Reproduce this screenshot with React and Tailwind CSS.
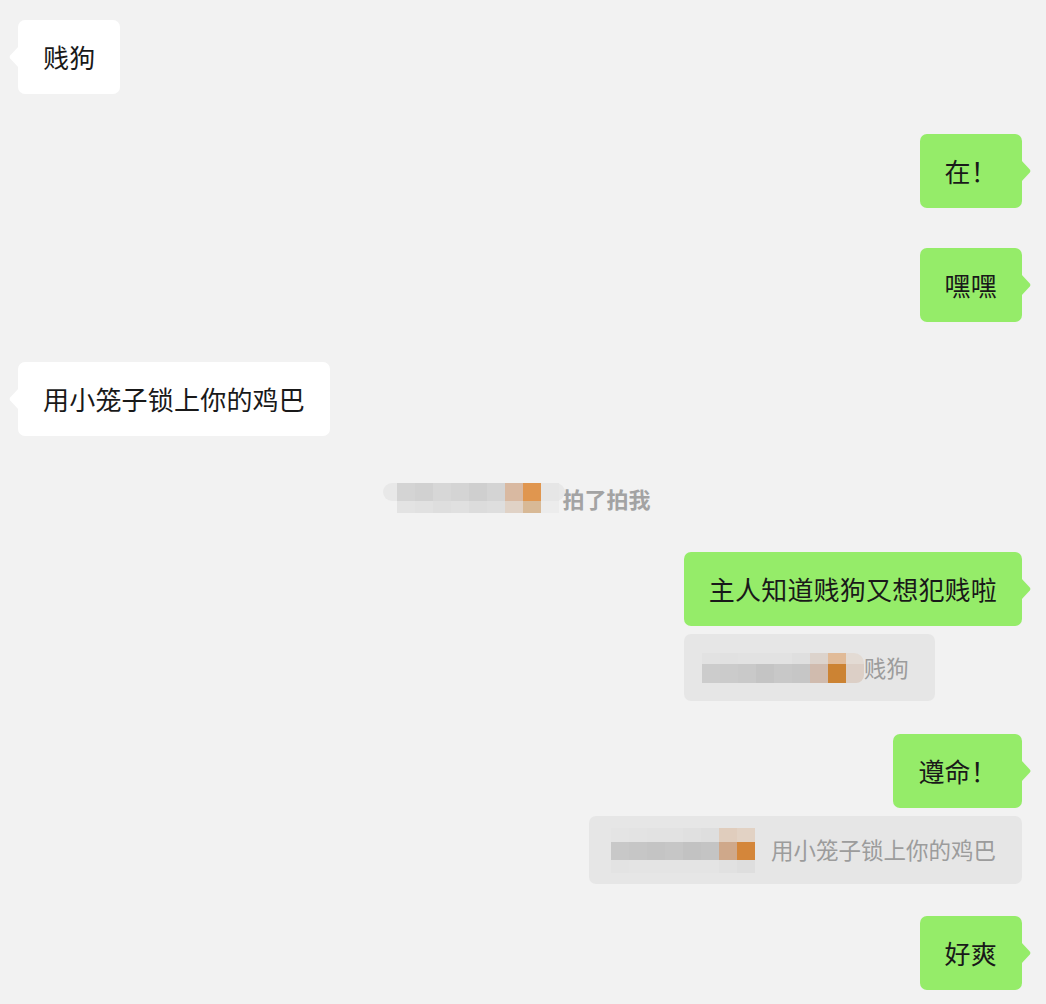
import React from 'react';

const font = 'font-["Noto_Sans_CJK_SC","Noto_Sans",sans-serif]';

const Tail = ({ side, color }) =>
  side === 'left' ? (
    <svg className="absolute left-[-10px] top-1/2 -translate-y-1/2" width="11" height="22" viewBox="0 0 11 22">
      <path d="M11 0 L11 22 L2.2 12.6 Q0.8 11 2.2 9.4 Z" className={color} />
    </svg>
  ) : (
    <svg className="absolute right-[-10px] top-1/2 -translate-y-1/2" width="11" height="22" viewBox="0 0 11 22">
      <path d="M0 0 L0 22 L8.8 12.6 Q10.2 11 8.8 9.4 Z" className={color} />
    </svg>
  );

const Bubble = ({ side, children }) => {
  const mine = side === 'right';
  return (
    <div
      className={`relative rounded-[7px] px-[25px] py-[19px] text-[26px] leading-[36px] tracking-[0.2px] text-[#191919] whitespace-nowrap ${
        mine ? 'bg-[#95ec69]' : 'bg-white'
      }`}
    >
      {children}
      <Tail side={side} color={mine ? 'fill-[#95ec69]' : 'fill-white'} />
    </div>
  );
};

// pixelated name blocks
const Mosaic = ({ rows, className = '' }) => (
  <div className={`flex flex-col ${className}`}>
    {rows.map((row, i) => (
      <div key={i} className={`flex ${row.h}`}>
        {row.cells.map((c, j) => (
          <div key={j} className={`w-[18px] h-full ${c}`} />
        ))}
      </div>
    ))}
  </div>
);

const Quote = ({ mosaic, text, className = '' }) => (
  <div
    className={`flex items-center rounded-[7px] bg-[#e6e6e6] pl-[18px] pr-[26px] h-[67px] text-[22.5px] text-[#9c9c9c] whitespace-nowrap ${className}`}
  >
    {mosaic}
    <span>{text}</span>
  </div>
);

export default function App() {
  return (
    <div className={`min-h-[1004px] w-full bg-[#f2f2f2] pl-[18px] pr-[24px] pt-[20px] ${font}`}>
      <div className="flex flex-col">
        <div className="flex">
          <Bubble side="left">贱狗</Bubble>
        </div>

        <div className="flex justify-end mt-[40px]">
          <Bubble side="right">在！</Bubble>
        </div>

        <div className="flex justify-end mt-[40px]">
          <Bubble side="right">嘿嘿</Bubble>
        </div>

        <div className="flex mt-[40px]">
          <Bubble side="left">用小笼子锁上你的鸡巴</Bubble>
        </div>

        {/* system tip */}
        <div className="flex justify-center items-center mt-[44px] h-[36px] pr-[6px]">
          <div className="relative w-[182px] h-[30px]">
            <div className="absolute left-0 top-0 h-[18px] w-[182px] rounded-full bg-[#e8e8e8]" />
            <Mosaic
              className="absolute left-[14px] top-0"
              rows={[
                {
                  h: 'h-[18px]',
                  cells: [
                    'bg-[#d4d4d4]',
                    'bg-[#d1d1d1]',
                    'bg-[#d7d7d7]',
                    'bg-[#d4d4d4]',
                    'bg-[#cfcfcf]',
                    'bg-[#d4d4d4]',
                    'bg-[#d9b9a1]',
                    'bg-[#e0964f]',
                    'bg-[#e6e6e6]',
                  ],
                },
                {
                  h: 'h-[12px]',
                  cells: [
                    'bg-[#e3e3e3]',
                    'bg-[#e1e1e1]',
                    'bg-[#dedede]',
                    'bg-[#e0e0e0]',
                    'bg-[#dcdcdc]',
                    'bg-[#dedede]',
                    'bg-[#e0d2c6]',
                    'bg-[#d8b996]',
                    'bg-[#ececec]',
                  ],
                },
              ]}
            />
          </div>
          <span className="-ml-[3px] text-[22px] font-bold text-[#a3a3a3]">拍了拍我</span>
        </div>

        <div className="flex justify-end mt-[36px]">
          <div className="flex flex-col items-start">
            <Bubble side="right">主人知道贱狗又想犯贱啦</Bubble>
            <Quote
              className="mt-[8px]"
              text="贱狗"
              mosaic={
                <Mosaic
                  rows={[
                    {
                      h: 'h-[11px]',
                      cells: [
                        'bg-[#e2e2e2]',
                        'bg-[#e1e1e1]',
                        'bg-[#e2e2e2]',
                        'bg-[#e2e2e2]',
                        'bg-[#e2e2e2]',
                        'bg-[#dfdfdf]',
                        'bg-[#dcd3cc]',
                        'bg-[#e1bb98]',
                        'bg-[#e3dbd4] rounded-tr-[10px]',
                      ],
                    },
                    {
                      h: 'h-[19px]',
                      cells: [
                        'bg-[#cccccc]',
                        'bg-[#cbcbcb]',
                        'bg-[#c9c9c9]',
                        'bg-[#c4c4c4]',
                        'bg-[#c8c8c8]',
                        'bg-[#c6c6c6]',
                        'bg-[#d0bbae]',
                        'bg-[#cc8333]',
                        'bg-[#dccfc6] rounded-br-[8px]',
                      ],
                    },
                  ]}
                />
              }
            />
          </div>
        </div>

        <div className="flex justify-end mt-[33px]">
          <div className="flex flex-col items-end">
            <Bubble side="right">遵命！</Bubble>
            <Quote
              className="mt-[8px] pl-[22px] pr-[25px] h-[68px]"
              text="用小笼子锁上你的鸡巴"
              mosaic={
                <Mosaic
                  className="mr-[16px]"
                  rows={[
                    {
                      h: 'h-[14px]',
                      cells: [
                        'bg-[#e4e4e4]',
                        'bg-[#e3e3e3]',
                        'bg-[#e2e2e2]',
                        'bg-[#e2e2e2]',
                        'bg-[#e0e0e0]',
                        'bg-[#dedede]',
                        'bg-[#e0cdbd]',
                        'bg-[#e2d2c4]',
                      ],
                    },
                    {
                      h: 'h-[18px]',
                      cells: [
                        'bg-[#c8c8c8]',
                        'bg-[#c6c6c6]',
                        'bg-[#c4c4c4]',
                        'bg-[#c6c6c6]',
                        'bg-[#c2c2c2]',
                        'bg-[#c4c4c4]',
                        'bg-[#cfa88a]',
                        'bg-[#d4863a]',
                      ],
                    },
                    {
                      h: 'h-[13px]',
                      cells: [
                        'bg-[#e3e3e3]',
                        'bg-[#e4e4e4]',
                        'bg-[#e4e4e4]',
                        'bg-[#e4e4e4]',
                        'bg-[#e4e4e4]',
                        'bg-[#e4e4e4]',
                        'bg-[#e1e1e1]',
                        'bg-[#dedede]',
                      ],
                    },
                  ]}
                />
              }
            />
          </div>
        </div>

        <div className="flex justify-end mt-[32px]">
          <Bubble side="right">好爽</Bubble>
        </div>
      </div>
    </div>
  );
}
